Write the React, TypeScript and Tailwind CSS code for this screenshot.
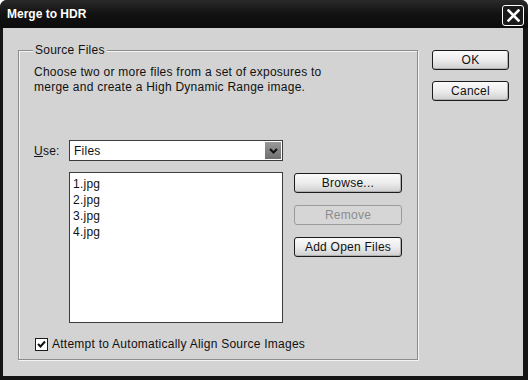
import { useState } from 'react'

const files = ['1.jpg', '2.jpg', '3.jpg', '4.jpg']

function Button({ label, disabled, className = '' }: { label: string; disabled?: boolean; className?: string }) {
  return (
    <button
      disabled={disabled}
      className={`h-[20px] rounded-[3px] border text-[12px] leading-none tracking-[0.25px] ${
        disabled
          ? 'border-[#9a9a9a] bg-[#d6d6d6] text-[#8c8c8c]'
          : 'border-[#1c1c1c] bg-gradient-to-b from-[#fbfbfb] via-[#ececec] to-[#cfcfcf] text-[#111] shadow-[inset_-1px_-1px_0_#b0b0b0]'
      } ${className}`}
    >
      {label}
    </button>
  )
}

export default function App() {
  const [align, setAlign] = useState(true)

  return (
    <div
      className="w-[528px] h-[380px] bg-[#141414] flex flex-col rounded-t-[7px] overflow-hidden"
      style={{ fontFamily: '"Liberation Sans", Arial, sans-serif' }}
    >
      {/* Title bar */}
      <div className="h-[28px] flex items-center justify-between pl-[7px] pr-[4px] bg-gradient-to-b from-[#2a2a2a] via-[#121212] to-[#0c0c0c]">
        <span className="text-white font-bold text-[12px]">Merge to HDR</span>
        <div className="w-[22px] h-[21px] mt-[2px] rounded-[3px] border border-white bg-[#1a1a1a] flex items-center justify-center">
          <svg width="13" height="13" viewBox="0 0 13 13">
            <path d="M1.5 1.5 L11.5 11.5 M11.5 1.5 L1.5 11.5" stroke="white" strokeWidth="2.6" strokeLinecap="square" />
          </svg>
        </div>
      </div>

      {/* Body */}
      <div className="flex-1 ml-[3px] mr-[5px] mb-[4px] bg-[#d3d3d3] flex pl-[15px] pt-[22px]">
        {/* Group box */}
        <div className="relative w-[400px] h-[310px] border border-[#8c8c8c] shadow-[1px_1px_0_#f4f4f4,inset_1px_1px_0_#f4f4f4] text-[12px] tracking-[0.25px] text-[#111]">
          <span className="absolute -top-[8px] left-[14px] px-[2px] bg-[#d3d3d3] leading-[15px]">Source Files</span>

          <div className="pl-[15px] pt-[14px] leading-[15px]">
            <p>Choose two or more files from a set of exposures to</p>
            <p>merge and create a High Dynamic Range image.</p>
          </div>

          {/* Use row */}
          <div className="flex items-center pl-[15px] mt-[45px]">
            <span className="w-[35px]">
              <span className="underline">U</span>se:
            </span>
            <div className="w-[214px] h-[21px] bg-white border border-[#3c3c3c] flex items-center justify-between pl-[4px] pr-[1px]">
              <span>Files</span>
              <div className="w-[16px] h-[17px] bg-gradient-to-b from-[#9a9a9a] to-[#6e6e6e] flex items-center justify-center">
                <svg width="9" height="6" viewBox="0 0 9 6">
                  <path d="M1 1 L4.5 4.5 L8 1" stroke="#111" strokeWidth="2" fill="none" />
                </svg>
              </div>
            </div>
          </div>

          {/* List + buttons */}
          <div className="flex pl-[50px] mt-[11px]">
            <div className="w-[214px] h-[151px] bg-white border border-[#3c3c3c] pl-[3px] pt-[3px] leading-[16px]">
              {files.map(f => (
                <div key={f}>{f}</div>
              ))}
            </div>
            <div className="flex flex-col gap-[12px] ml-[11px] mt-[1px]">
              <Button label="Browse..." className="w-[108px]" />
              <Button label="Remove" disabled className="w-[108px]" />
              <Button label="Add Open Files" className="w-[108px]" />
            </div>
          </div>

          {/* Checkbox */}
          <label className="flex items-center gap-[4px] pl-[16px] mt-[12px]">
            <span
              onClick={() => setAlign(!align)}
              className="w-[13px] h-[13px] bg-white border border-[#1c1c1c] flex items-center justify-center"
            >
              {align && (
                <svg width="9" height="8" viewBox="0 0 9 8">
                  <path d="M1 4 L3.5 6.5 L8 1.5" stroke="#111" strokeWidth="2" fill="none" />
                </svg>
              )}
            </span>
            <span>Attempt to Automatically Align Source Images</span>
          </label>
        </div>

        {/* Right buttons */}
        <div className="flex flex-col gap-[11px] ml-[14px]">
          <Button label="OK" className="w-[77px]" />
          <Button label="Cancel" className="w-[77px]" />
        </div>
      </div>
    </div>
  )
}
